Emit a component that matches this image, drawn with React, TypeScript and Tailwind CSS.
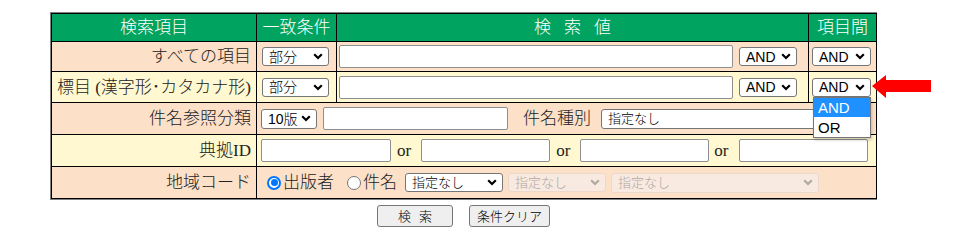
import React from "react";

const ctl = "font-['Liberation_Sans','Noto_Sans_CJK_JP',sans-serif]";
const cell = "border border-black p-0";

function Select({ text, className = "", disabled = false }: { text: string; className?: string; disabled?: boolean }) {
  return (
    <div
      className={`flex shrink-0 items-center justify-between rounded-[3px] border pl-[6px] pr-[5px] ${ctl} ${
        disabled ? "border-[#ecd9cc] bg-[#f8eae1] text-[#b0a8a2]" : "border-[#767676] bg-white text-black"
      } ${className}`}
    >
      <span>{text}</span>
      <svg width="10" height="7" viewBox="0 0 10 7">
        <path d="M1.2 1.2 5 5 8.8 1.2" fill="none" stroke="currentColor" strokeWidth="2.2" />
      </svg>
    </div>
  );
}

function Input({ className = "" }: { className?: string }) {
  return <input type="text" readOnly className={`shrink-0 rounded-[2px] border border-[#8f8f8f] bg-white ${className}`} />;
}

function Radio({ checked = false, className = "" }: { checked?: boolean; className?: string }) {
  if (checked)
    return (
      <span className={`flex h-[14px] w-[14px] shrink-0 items-center justify-center rounded-full border-2 border-[#0075ff] bg-white ${className}`}>
        <span className="block h-[7px] w-[7px] rounded-full bg-[#0075ff]" />
      </span>
    );
  return <span className={`block h-[14px] w-[14px] shrink-0 rounded-full border border-[#767676] bg-white ${className}`} />;
}

export default function App() {
  return (
    <div className="relative h-[247px] w-[970px] bg-white font-['Liberation_Serif','Noto_Sans_CJK_JP',serif] text-[17px] font-light leading-none text-[#222]">
      <div className="pl-[50px] pt-[12px]">
        <div className="w-[827px] border border-[#808080]">
          <table className="w-[825px] table-fixed border-collapse">
            <colgroup>
              <col className="w-[205px]" />
              <col className="w-[80px]" />
              <col className="w-[472px]" />
              <col className="w-[68px]" />
            </colgroup>
            <tbody>
              <tr className="h-[28px] bg-[#00a460] text-center text-white">
                <td className={cell}>検索項目</td>
                <td className={cell}>一致条件</td>
                <td className={cell}>
                  <span className="mr-[-13px] tracking-[13px]">検索値</span>
                </td>
                <td className={cell}>項目間</td>
              </tr>
              <tr className="h-[30px] bg-[#fce0c8]">
                <td className={`${cell} pr-[5px] text-right`}>すべての項目</td>
                <td className={`${cell} pl-[5px]`}>
                  <Select text="部分" className="h-[19px] w-[67px] text-[14px]" />
                </td>
                <td className={`${cell} pl-[2px]`}>
                  <div className="flex items-center gap-[6px]">
                    <Input className="h-[23px] w-[394px]" />
                    <Select text="AND" className="h-[19px] w-[58px] text-[14px]" />
                  </div>
                </td>
                <td className={`${cell} pl-[3px]`}>
                  <Select text="AND" className="h-[19px] w-[59px] text-[14px]" />
                </td>
              </tr>
              <tr className="h-[31px] bg-[#fff8d0]">
                <td className={`${cell} pr-[5px] text-right`}>標目 (漢字形･カタカナ形)</td>
                <td className={`${cell} pl-[5px]`}>
                  <Select text="部分" className="h-[19px] w-[67px] text-[14px]" />
                </td>
                <td className={`${cell} pl-[2px]`}>
                  <div className="flex items-center gap-[6px]">
                    <Input className="h-[23px] w-[394px]" />
                    <Select text="AND" className="h-[19px] w-[58px] text-[14px]" />
                  </div>
                </td>
                <td className={`${cell} pl-[3px]`}>
                  <Select text="AND" className="h-[19px] w-[59px] text-[14px]" />
                </td>
              </tr>
              <tr className="h-[32px] bg-[#fce0c8]">
                <td className={`${cell} pr-[5px] text-right`}>件名参照分類</td>
                <td className={`${cell} pl-[4px]`} colSpan={3}>
                  <div className="flex items-center">
                    <Select text="10版" className="h-[20px] w-[56px] pl-[4px] text-[14px]" />
                    <Input className="ml-[6px] h-[23px] w-[185px]" />
                    <span className="ml-[15px]">件名種別</span>
                    <Select text="指定なし" className="ml-[10px] h-[20px] w-[265px] pl-[4px] text-[13px]" />
                  </div>
                </td>
              </tr>
              <tr className="h-[32px] bg-[#fff8d0]">
                <td className={`${cell} pr-[5px] text-right`}>典拠ID</td>
                <td className={`${cell} pl-[4px]`} colSpan={3}>
                  <div className="flex items-center">
                    <Input className="h-[23px] w-[130px]" />
                    <span className="ml-[6px] mr-[10px]">or</span>
                    <Input className="h-[23px] w-[129px]" />
                    <span className="ml-[6px] mr-[10px]">or</span>
                    <Input className="h-[23px] w-[129px]" />
                    <span className="ml-[5px] mr-[10px]">or</span>
                    <Input className="h-[23px] w-[129px]" />
                  </div>
                </td>
              </tr>
              <tr className="h-[32px] bg-[#fce0c8]">
                <td className={`${cell} pr-[5px] text-right`}>地域コード</td>
                <td className={`${cell} pl-[10px]`} colSpan={3}>
                  <div className="flex items-center">
                    <Radio checked />
                    <span className="ml-[2px]">出版者</span>
                    <Radio className="ml-[13px]" />
                    <span className="ml-[2px]">件名</span>
                    <Select text="指定なし" className="ml-[8px] h-[19px] w-[98px] pl-[4px] text-[13px]" />
                    <Select text="指定なし" disabled className="ml-[5px] h-[19px] w-[98px] pl-[4px] text-[13px]" />
                    <Select text="指定なし" disabled className="ml-[5px] h-[20px] w-[208px] pl-[4px] text-[13px]" />
                  </div>
                </td>
              </tr>
            </tbody>
          </table>
        </div>
        <div className={`mt-[5px] flex w-[827px] justify-center gap-[16px] text-[13px] text-black ${ctl}`}>
          <button className="h-[22px] w-[76px] rounded-[3px] border border-[#767676] bg-[#efefef]">
            検<span className="ml-[8px]">索</span>
          </button>
          <button className="h-[22px] w-[81px] rounded-[3px] border border-[#767676] bg-[#efefef]">条件クリア</button>
        </div>
      </div>

      {/* open option list of the 項目間 select */}
      <div className={`absolute left-[813px] top-[97px] w-[58px] border border-[#767676] bg-white text-[15px] text-black shadow-[1px_2px_3px_rgba(0,0,0,0.2)] ${ctl}`}>
        <div className="flex h-[19px] items-center bg-[#1e90ff] pl-[4px] text-white">AND</div>
        <div className="flex h-[20px] items-center pl-[4px]">OR</div>
      </div>

      <svg className="absolute left-[870px] top-[73px]" width="64" height="28" viewBox="0 0 64 28">
        <polygon points="2,13 16,2 16,7 61,7 61,19 16,19 16,25" fill="#ff0000" />
      </svg>
    </div>
  );
}
